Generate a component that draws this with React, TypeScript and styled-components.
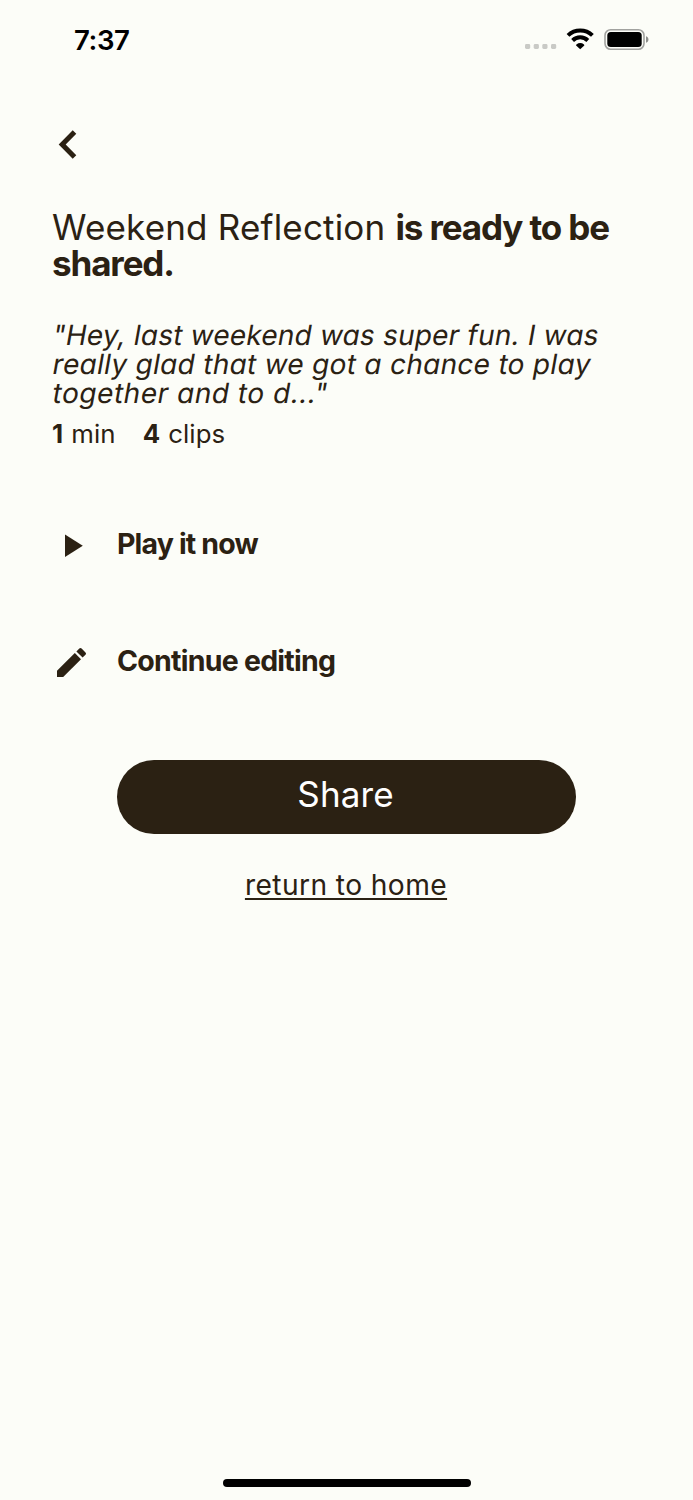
import React from 'react';
import styled, { createGlobalStyle } from 'styled-components';

const ink = '#2b2113';
const paper = '#fcfdf8';

const GlobalStyle = createGlobalStyle`
  * { box-sizing: border-box; }
  body {
    margin: 0;
    background: ${paper};
    color: ${ink};
    font-family: Inter, "Liberation Sans", sans-serif;
  }
  button { font: inherit; color: inherit; border: 0; padding: 0; background: none; }
`;

const Screen = styled.div`
  width: 693px;
  height: 1500px;
  display: flex;
  flex-direction: column;
  background: ${paper};
  overflow: hidden;
`;

const StatusBar = styled.header`
  height: 80px;
  display: flex;
  justify-content: space-between;
  padding: 23px 44px 0 74px;
  color: #000;
`;

const Clock = styled.time`
  font-size: 27.6px;
  line-height: 34px;
  font-weight: 600;
  letter-spacing: -0.4px;
`;

const StatusIcons = styled.svg`
  width: 125px;
  height: 24px;
  margin-top: 4px;
`;

const Content = styled.main`
  flex: 1;
  display: flex;
  flex-direction: column;
  align-items: flex-start;
  padding: 50px 52px 0;
`;

const BackButton = styled.button`
  width: 30px;
  height: 30px;
  margin-left: 6px;
  svg { display: block; }
`;

const Title = styled.h1`
  margin: 49px 0 0;
  font-size: 35px;
  line-height: 36px;
  font-weight: 700;
  letter-spacing: -1.12px;
  white-space: nowrap;
`;

const TitleName = styled.span`
  font-weight: 400;
  letter-spacing: 0.18px;
`;

const Quote = styled.blockquote`
  margin: 40px 0 0 1px;
  font-size: 28px;
  line-height: 29.2px;
  font-weight: 400;
  font-feature-settings: "cv11";
  white-space: nowrap;
`;

const QuoteLine = styled.span<{ $tracking: number }>`
  display: block;
  width: max-content;
  letter-spacing: ${p => p.$tracking}px;
  transform: skewX(-10deg);
`;

const Stats = styled.div`
  display: flex;
  gap: 27px;
  margin-top: 8px;
  font-size: 25.8px;
  line-height: 34px;
  letter-spacing: 0.1px;
`;

const Stat = styled.span`
  display: flex;
  gap: 8px;
`;

const Actions = styled.nav`
  display: flex;
  flex-direction: column;
  gap: 77px;
  margin-top: 74px;
`;

const Action = styled.button`
  display: flex;
  align-items: center;
  height: 40px;
  svg { display: block; width: 40px; height: 40px; }
`;

const ActionLabel = styled.span<{ $tracking: number }>`
  margin-left: 25px;
  font-size: 28.5px;
  line-height: 34px;
  font-weight: 700;
  letter-spacing: ${p => p.$tracking}px;
  margin-bottom: 2px;
`;

const ShareButton = styled.button`
  align-self: center;
  width: 459px;
  height: 74px;
  margin-top: 78px;
  padding: 0 2px 5px 0;
  border-radius: 37px;
  background: ${ink};
  color: #fff;
  font-size: 35px;
  letter-spacing: 0.1px;
`;

const HomeLink = styled.a`
  align-self: center;
  margin: 33px 1px 0 0;
  font-size: 28.2px;
  line-height: 36px;
  letter-spacing: 0.4px;
  text-decoration: underline;
  text-decoration-thickness: 2px;
  text-underline-offset: 3px;
  text-decoration-skip-ink: none;
`;

const HomeIndicator = styled.div`
  align-self: center;
  width: 248px;
  height: 8px;
  margin-bottom: 13px;
  border-radius: 4px;
  background: #000;
`;

export default function App() {
  return (
    <Screen>
      <GlobalStyle />
      <StatusBar>
        <Clock>7:37</Clock>
        <StatusIcons viewBox="0 0 125 24" aria-label="Status">
          <g fill="#c9cac6">
            <rect x="1" y="17" width="5.2" height="5" rx="1.4" />
            <rect x="9.7" y="17" width="5.2" height="5" rx="1.4" />
            <rect x="18.3" y="17" width="5.2" height="5" rx="1.4" />
            <rect x="27" y="17" width="5.2" height="5" rx="1.4" />
          </g>
          <g fill="none" stroke="#000" strokeWidth="4">
            <path d="M44 8.4a17.6 17.6 0 0 1 24.4 0" />
            <path d="M48.6 13.5a10.8 10.8 0 0 1 15.2 0" />
          </g>
          <path d="M52.4 17.4a6.2 6.2 0 0 1 7.6 0c.5.5.5.9 0 1.4L56.2 22.2 52.4 18.8c-.5-.5-.5-.9 0-1.4Z" />
          <rect x="81" y="2.8" width="39" height="19.4" rx="5.6" fill="none" stroke="#a1a29f" strokeWidth="1.6" />
          <rect x="83.3" y="5" width="34.4" height="15" rx="3.5" />
          <path d="M122 9.3c3.3 1.1 3.3 5.3 0 6.4Z" fill="#8e8f8c" />
        </StatusIcons>
      </StatusBar>
      <Content>
        <BackButton aria-label="Back">
          <svg width="30" height="30" fill="none" stroke={ink} strokeWidth="5">
            <path d="M16.5 1.9 4.2 14.4 16.5 26.9" />
          </svg>
        </BackButton>
        <Title>
          <TitleName>Weekend Reflection </TitleName>is ready to be
          <br />
          shared.
        </Title>
        <Quote>
          <QuoteLine $tracking={0.2}>"Hey, last weekend was super fun. I was</QuoteLine>
          <QuoteLine $tracking={0.3}>really glad that we got a chance to play</QuoteLine>
          <QuoteLine $tracking={0.53}>together and to d..."</QuoteLine>
        </Quote>
        <Stats>
          <Stat><b>1</b>min</Stat>
          <Stat><b>4</b>clips</Stat>
        </Stats>
        <Actions>
          <Action>
            <svg viewBox="0 0 40 40" fill={ink}><path d="M13 9.4v22.6l17.8-11.3Z" /></svg>
            <ActionLabel $tracking={-0.85}>Play it now</ActionLabel>
          </Action>
          <Action>
            <svg viewBox="0 0 40 40" fill={ink}>
              <path d="M5 28.8v6.2h6.2L29 17.2 22.8 11Z" />
              <path d="M33.5 12.7a1.6 1.6 0 0 0 0-2.3l-3.9-3.9a1.6 1.6 0 0 0-2.3 0l-2.9 2.9 6.2 6.2Z" />
            </svg>
            <ActionLabel $tracking={-0.75}>Continue editing</ActionLabel>
          </Action>
        </Actions>
        <ShareButton>Share</ShareButton>
        <HomeLink>return to home</HomeLink>
      </Content>
      <HomeIndicator />
    </Screen>
  );
}
